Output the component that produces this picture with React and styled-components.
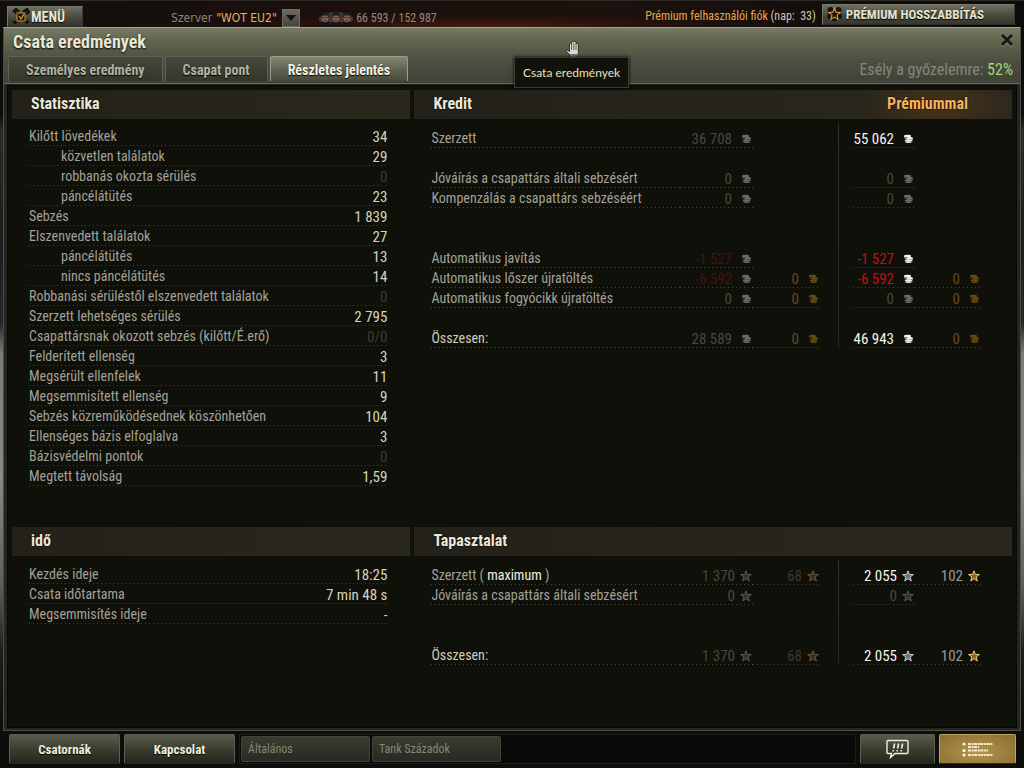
import React from "react";
import styled, { createGlobalStyle } from "styled-components";

const narrow = `"Roboto Condensed", "Liberation Sans Narrow", "Liberation Sans", sans-serif`;

const GlobalStyle = createGlobalStyle`
  * {
    box-sizing: border-box;
  }
  body {
    margin: 0;
    background: #0b0b09;
    font-family: ${narrow};
    font-size: 14px;
    color: #a3a197;
  }
  button, select {
    font-family: inherit;
  }
`;

const Page = styled.div`
  display: flex;
  flex-direction: column;
  min-height: 100vh;
  background: linear-gradient(
    #0b0a09 0,
    #0d0d0d 15%,
    #2a2b2b 17%,
    #1b1d1e 30%,
    #22272a 42%,
    #7d7b79 46%,
    #8b8987 62%,
    #5f5e5c 76%,
    #1d1d1c 85%,
    #0c0c0a 95%
  );
`;

const TopBar = styled.header`
  display: flex;
  align-items: center;
  height: 27px;
  padding: 0 9px 0 7px;
  border-top: 1px solid #2c2a26;
  background: radial-gradient(
      ellipse at 48% 100%,
      #4a1f0f 0,
      rgba(50, 20, 10, 0.7) 18%,
      transparent 38%
    ),
    linear-gradient(90deg, #120f0d, #1b0f0c 30%, #1c110d 60%, #0c0b09);
`;

const MetalButton = styled.button`
  display: flex;
  align-items: center;
  gap: 4px;
  height: 21px;
  padding: 0 ${({ $end }) => $end}px 0 4px;
  border: 1px solid #77796a;
  border-right-color: #3a3b32;
  border-bottom-color: #2b2c25;
  background: linear-gradient(#6d6f60, #45473b 60%, #36382e);
  color: #e6e4d2;
  font-size: 13px;
  font-weight: bold;
  text-shadow: 0 1px 1px #000;
  white-space: nowrap;
`;

const MenuButton = styled(MetalButton)`
  align-self: flex-end;
  gap: 1px;
  font-size: 14px;
`;

const Server = styled.div`
  display: flex;
  align-items: center;
  margin-left: 88px;
  padding-top: 7px;
  font-family: "DejaVu Sans Condensed", "DejaVu Sans", sans-serif;
  font-size: 12px;
  color: #8b877c;
`;

const ServerSelect = styled.select`
  appearance: none;
  padding: 0 23px 0 4px;
  border: 0;
  background: transparent;
  color: #e3ae63;
  font-family: inherit;
  font-size: 12px;
`;

const SelectArrow = styled.span`
  display: flex;
  align-items: center;
  justify-content: center;
  width: 18px;
  height: 18px;
  margin-left: -18px;
  border: 1px solid #6d6e62;
  background: linear-gradient(#6a6b5e, #43443a);
  pointer-events: none;
`;

const Online = styled.div`
  display: flex;
  align-items: center;
  gap: 2px;
  margin-left: 18px;
  padding-top: 8px;
  font-size: 12px;
  color: #8f8b80;
`;

const Account = styled.div`
  margin: 4px 6px 0 auto;
  font-size: 12px;
  color: #c9c6bb;
  white-space: pre;
`;

const Gold = styled.span`
  color: #e9a44b;
`;

const Window = styled.main`
  display: flex;
  flex-direction: column;
  flex: 1;
  margin: 0 3px;
  border: 1px solid #4b4d42;
  border-top-color: #a2a48d;
  background: #24261f;
`;

const TitleBar = styled.div`
  position: relative;
  padding: 3px 4px 2px;
  border-bottom: 1px solid #65675a;
  background: linear-gradient(#777a65 0, #63664f 12px, #4c4e40 34px, #404237);
`;

const TitleRow = styled.div`
  display: flex;
  justify-content: space-between;
  align-items: flex-start;
  height: 25px;
  padding: 0 2px 0 5px;
`;

const Title = styled.h1`
  margin: 0;
  font-size: 18px;
  line-height: 22px;
  color: #e9e7d8;
  text-shadow: 0 1px 2px #000;
`;

const CloseButton = styled.button`
  display: flex;
  padding: 2px 0 0;
  border: 0;
  background: none;
`;

const TabRow = styled.div`
  display: flex;
  align-items: flex-end;
  gap: 2px;
`;

const Tab = styled.button`
  height: 25px;
  padding: 2px 17px 0;
  border: 1px solid ${({ $active }) => ($active ? "#9b9d89" : "#5f6154")};
  border-bottom: 0;
  border-radius: 2px 2px 0 0;
  background: ${({ $active }) =>
    $active
      ? "linear-gradient(#838672, #5c5f4d 60%, #484a3c)"
      : "linear-gradient(#45483b, #34362c)"};
  color: ${({ $active }) => ($active ? "#f4f2e4" : "#b4b2a3")};
  font-size: 14px;
  font-weight: bold;
  text-shadow: 0 1px 1px #000;
`;

const Chance = styled.div`
  margin-left: auto;
  padding: 2px 3px 0 0;
  font-size: 16px;
  line-height: 23px;
  color: #85867a;
  b {
    color: #9fd672;
    font-weight: normal;
  }
`;

const Tooltip = styled.div`
  position: absolute;
  left: 510px;
  top: 29px;
  padding: 6px 8px;
  border: 1px solid #3b3b33;
  background: #12120d;
  box-shadow: 0 0 3px #000;
  color: #e6e3b9;
  font-family: Lato, sans-serif;
  font-size: 12px;
  line-height: 17px;
  white-space: nowrap;
`;

const Cursor = styled.svg`
  position: absolute;
  left: 561px;
  top: 12px;
`;

const Body = styled.div`
  display: grid;
  grid-template-columns: minmax(0, 2fr) minmax(0, 3fr);
  grid-template-rows: auto 1fr;
  flex: 1;
  column-gap: 4px;
  row-gap: 41px;
  margin: 1px 3px 2px;
  padding: 4px 4px 0;
  border: 1px solid #080805;
  background: #10100b;
`;

const Section = styled.section`
  display: flex;
  flex-direction: column;
`;

const SectionHead = styled.div`
  display: flex;
  align-items: center;
  justify-content: space-between;
  height: 29px;
  padding: 0 44px 1px 19px;
  background: ${({ $glow }) =>
      $glow
        ? "radial-gradient(80px 36px at 88% 50%, rgba(96, 62, 24, 0.55), transparent),"
        : ""}
    linear-gradient(90deg, #24211a, #2a271d);
  color: #e9e7d8;
`;

const Heading = styled.h2`
  margin: 0;
  font-size: 16px;
  line-height: 20px;
  color: ${({ $gold }) => ($gold ? "#f0b45f" : "inherit")};
  text-shadow: 0 0 2px #000;
`;

const dots = `repeating-linear-gradient(90deg, #43433a 0 1px, transparent 1px 4px) 0 100% / 100% 1px no-repeat`;

const StatTable = styled.table`
  margin: ${({ $top }) => $top}px 23px 0 17px;
  border-collapse: collapse;
  tr {
    height: 20px;
    background: ${dots};
  }
`;

const StatLabel = styled.th`
  padding: 0 0 0 ${({ $sub }) => ($sub ? 32 : 0)}px;
  font-weight: normal;
  line-height: 18px;
  text-align: left;
  white-space: nowrap;
`;

const StatValue = styled.td`
  padding: 2px 0 0;
  font-size: 15px;
  line-height: 18px;
  text-align: right;
  color: ${({ $dim }) => ($dim ? "#3b3b33" : "#d6d4bc")};
`;

const FinanceTable = styled.table`
  margin: ${({ $top }) => $top}px 31px 0 17px;
  border-collapse: collapse;
  table-layout: fixed;
  tr {
    height: 20px;
  }
  tr:first-child {
    height: 25px;
  }
`;

const FinanceLabel = styled.th`
  padding: 0 0 1px;
  background: ${({ $blank }) => ($blank ? "none" : dots)};
  color: ${({ $total }) => ($total ? "#cfcdb4" : "inherit")};
  font-weight: normal;
  line-height: 18px;
  text-align: left;
  vertical-align: bottom;
  white-space: nowrap;
  b {
    color: #f1f0e4;
    font-weight: normal;
  }
`;

const AmountCell = styled.td`
  padding: 0 1px 0 0;
  background: ${({ $blank }) => ($blank ? "none" : dots)};
  vertical-align: bottom;
`;

const DividerCell = styled.td`
  padding: 0;
  background: linear-gradient(#34332b, #26251e) 18px 0 / 1px 100% no-repeat;
`;

const tones = {
  bright: "#f3f3ee",
  soft: "#9b9a90",
  dim: "#48483f",
  red: "#c60d0b",
  dimRed: "#4a100d",
  gold: "#654a22",
  dimGold: "#3f3726",
};

const Amount = styled.span`
  display: flex;
  align-items: center;
  justify-content: flex-end;
  gap: ${({ $gap }) => $gap}px;
  font-size: 15px;
  line-height: 18px;
  color: ${({ $tone }) => tones[$tone]};
  white-space: nowrap;
  svg {
    flex: none;
  }
`;

const BottomBar = styled.footer`
  display: flex;
  gap: 4px;
  height: 37px;
  padding: 3px 8px 4px 9px;
  background: #0d0d0b;
`;

const FootButton = styled.button`
  display: flex;
  align-items: center;
  justify-content: center;
  width: ${({ $width }) => $width}px;
  height: 30px;
  padding: 0;
  border: 1px solid ${({ $gold }) => ($gold ? "#c0a35e" : "#5c5e4f")};
  border-bottom-color: #2b2b22;
  border-radius: 2px;
  background: ${({ $gold }) =>
    $gold
      ? "radial-gradient(ellipse at 50% 60%, #b3954f, #8a6c30)"
      : "linear-gradient(#595b4b, #3b3d31 50%, #24261d)"};
  color: #f0eedc;
  font-size: 13px;
  font-weight: bold;
  text-shadow: 0 1px 1px #000;
`;

const Channels = styled.div`
  display: flex;
  flex: 1;
  gap: 2px;
  padding: 1px;
  border: 1px solid #1d1d19;
  background: #090908;
`;

const Channel = styled.button`
  width: 129px;
  height: 26px;
  padding: 0 6px;
  border: 1px solid #42443a;
  border-radius: 2px;
  background: linear-gradient(#3a3c31, #282a22);
  color: #85867a;
  font-size: 12px;
  text-align: left;
`;

const Coins = ({ gold, dim }) => {
  const light = gold ? "#e0a02c" : "#f0f0ee";
  const shade = gold ? "#7d5610" : "#80807e";
  return (
    <svg width="11" height="10" viewBox="0 0 11 10" opacity={dim ? 0.4 : 1} aria-hidden="true">
      <ellipse cx="4.500" cy="2.200" rx="3.600" ry="1.400" fill={light} />
      <path d="M1 2.800q3.500 2 7 0v1.500q-3.500 1.800-7 0Z" fill={shade} />
      <ellipse cx="6.800" cy="4.200" rx="3.200" ry="1.200" fill={light} />
      <path d="M3.600 4.700q3.200 1.600 6.400 0v1.400q-3.200 1.600-6.400 0Z" fill={shade} />
      <ellipse cx="5.600" cy="6.600" rx="3.800" ry="1.300" fill={light} />
      <path d="M1.800 7.100q3.800 1.800 7.600 0v1.100q-3.800 1.800-7.600 0Z" fill={shade} />
      <path d="M3 8.400h5" stroke={light} strokeWidth=".9" />
    </svg>
  );
};

const Star = ({ gold, dim }) => (
  <svg width="12" height="12" viewBox="0 0 12 12" opacity={dim ? 0.38 : 1} aria-hidden="true">
    <path
      d="M6 .8 7.3 4.4 11.4 4.5 8.2 7 9.3 11 6 8.7 2.7 11 3.8 7 .6 4.5 4.7 4.4Z"
      fill={gold ? "#8a6426" : "#6c7271"}
      stroke={gold ? "#f3c983" : "#c6cbc9"}
      strokeWidth="1"
    />
  </svg>
);

const MenuIcon = () => (
  <svg width="18" height="17" viewBox="0 0 18 17" aria-hidden="true">
    <path
      d="M1 4 4 1l3 3M11 4l4-3 2 3-3 2M3 4l12 11M15 4 3 15M1 13l3 3M14 15l3-2"
      fill="none"
      stroke="#15130d"
      strokeWidth="2.4"
    />
    <rect x="5" y="5" width="8" height="8" fill="#1c160d" stroke="#c98d35" />
    <path d="m7 8 2 3 3-5" fill="none" stroke="#e2a345" strokeWidth="1.2" />
  </svg>
);

const PremiumIcon = () => (
  <svg width="15" height="16" viewBox="0 0 17 17" aria-hidden="true">
    <circle cx="4" cy="4" r="3.400" fill="#17140e" />
    <circle cx="13" cy="4" r="3.400" fill="#17140e" />
    <circle cx="3.5" cy="11" r="3.400" fill="#17140e" />
    <circle cx="13.5" cy="11" r="3.400" fill="#17140e" />
    <circle cx="8.500" cy="14" r="3" fill="#17140e" />
    <path
      d="m8.500 2 1.800 4.400 4.600.4-3.500 3 1.100 4.600-4-2.500-4 2.500 1.100-4.600-3.500-3 4.600-.4Z"
      fill="#1f180c"
      stroke="#d79c45"
      strokeWidth="1.200"
    />
  </svg>
);

const Crew = () => (
  <svg width="36" height="17" viewBox="0 0 36 17" aria-hidden="true">
    <ellipse cx="18" cy="9" rx="17" ry="7" fill="#8a8583" opacity=".35" />
    {[7, 29, 18].map((x) => (
      <g key={x}>
        <path d={`M${x - 6} 16q0-5 6-5t6 5Z`} fill="#141518" />
        <ellipse cx={x} cy="8" rx="3.400" ry="4.400" fill="#805c50" />
        <path d={`M${x - 4} 8q-.5-6 4-6t4 6l-1.500-2.500h-5Z`} fill="#1b1d21" />
        <path d={`M${x - 2.5} 7.500h2M${x + 0.5} 7.500h2M${x - 1} 10.500h2`} stroke="#33211c" strokeWidth=".8" />
      </g>
    ))}
  </svg>
);

const stats = [
  ["Kilőtt lövedékek", "34"],
  ["közvetlen találatok", "29", true],
  ["robbanás okozta sérülés", "0", true],
  ["páncélátütés", "23", true],
  ["Sebzés", "1 839"],
  ["Elszenvedett találatok", "27"],
  ["páncélátütés", "13", true],
  ["nincs páncélátütés", "14", true],
  ["Robbanási sérüléstől elszenvedett találatok", "0"],
  ["Szerzett lehetséges sérülés", "2 795"],
  ["Csapattársnak okozott sebzés (kilőtt/É.erő)", "0/0"],
  ["Felderített ellenség", "3"],
  ["Megsérült ellenfelek", "11"],
  ["Megsemmisített ellenség", "9"],
  ["Sebzés közreműködésednek köszönhetően", "104"],
  ["Ellenséges bázis elfoglalva", "3"],
  ["Bázisvédelmi pontok", "0"],
  ["Megtett távolság", "1,59"],
];

const times = [
  ["Kezdés ideje", "18:25"],
  ["Csata időtartama", "7 min 48 s"],
  ["Megsemmisítés ideje", "-"],
];

// label, then [value, tone] for base, base gold, premium, premium gold
const credits = [
  ["Szerzett", ["36 708", "dim"], null, ["55 062", "bright"], null],
  null,
  ["Jóváírás a csapattárs általi sebzésért", ["0", "dim"], null, ["0", "dim"], null],
  ["Kompenzálás a csapattárs sebzéséért", ["0", "dim"], null, ["0", "dim"], null],
  null,
  null,
  ["Automatikus javítás", ["-1 527", "dimRed"], null, ["-1 527", "red"], null],
  ["Automatikus lőszer újratöltés", ["-6 592", "dimRed"], ["0", "gold"], ["-6 592", "red"], ["0", "gold"]],
  ["Automatikus fogyócikk újratöltés", ["0", "dim"], ["0", "gold"], ["0", "dim"], ["0", "gold"]],
  null,
  ["Összesen:", ["28 589", "dim"], ["0", "gold"], ["46 943", "bright"], ["0", "gold"]],
];

const experience = [
  [<>Szerzett ( <b>maximum</b> )</>, ["1 370", "dim"], ["68", "dimGold"], ["2 055", "bright"], ["102", "soft"]],
  ["Jóváírás a csapattárs általi sebzésért", ["0", "dim"], null, ["0", "dim"], null],
  null,
  null,
  ["Összesen:", ["1 370", "dim"], ["68", "dimGold"], ["2 055", "bright"], ["102", "soft"]],
];

const StatList = ({ rows, top }) => (
  <StatTable $top={top}>
    <tbody>
      {rows.map(([label, value, sub], i) => (
        <tr key={i}>
          <StatLabel scope="row" $sub={sub}>{label}</StatLabel>
          <StatValue $dim={value === "0" || value === "0/0"}>{value}</StatValue>
        </tr>
      ))}
    </tbody>
  </StatTable>
);

const AmountItem = ({ item, gold, icon: Icon, gap }) => {
  if (!item) return <AmountCell $blank />;
  const [value, tone] = item;
  const dim = !["bright", "red", "soft"].includes(tone);
  return (
    <AmountCell>
      <Amount $tone={tone} $gap={gap}>
        {value}
        <Icon gold={gold} dim={dim} />
      </Amount>
    </AmountCell>
  );
};

const Finance = ({ rows, icon, gap, top }) => (
  <FinanceTable $top={top}>
    <colgroup>
      <col />
      <col width="73" />
      <col width="67" />
      <col width="33" />
      <col width="62" />
      <col width="66" />
    </colgroup>
    <tbody>
      {rows.map((row, i) => {
        const [label, base, baseGold, premium, premiumGold] = row || [];
        return (
          <tr key={i}>
            <FinanceLabel scope="row" $blank={!row} $total={label === "Összesen:"}>
              {label}
            </FinanceLabel>
            <AmountItem item={base} icon={icon} gap={gap} />
            <AmountItem item={baseGold} icon={icon} gap={gap} gold />
            {i === 0 && <DividerCell rowSpan={rows.length} />}
            <AmountItem item={premium} icon={icon} gap={gap} />
            <AmountItem item={premiumGold} icon={icon} gap={gap} gold />
          </tr>
        );
      })}
    </tbody>
  </FinanceTable>
);

const App = () => (
  <Page>
    <GlobalStyle />
    <TopBar>
      <MenuButton $end={17}>
        <MenuIcon />
        MENÜ
      </MenuButton>
      <Server>
        <label htmlFor="server">Szerver</label>
        <ServerSelect id="server">
          <option>"WOT EU2"</option>
        </ServerSelect>
        <SelectArrow>
          <svg width="10" height="6" viewBox="0 0 10 6">
            <path d="M0 0h10L5 6Z" fill="#11110d" />
          </svg>
        </SelectArrow>
      </Server>
      <Online>
        <Crew />
        66 593 / 152 987
      </Online>
      <Account>
        <Gold>Prémium felhasználói fiók</Gold> (nap:  33)
      </Account>
      <MetalButton $end={30}>
        <PremiumIcon />
        PRÉMIUM HOSSZABBÍTÁS
      </MetalButton>
    </TopBar>
    <Window>
      <TitleBar>
        <TitleRow>
          <Title>Csata eredmények</Title>
          <CloseButton aria-label="Bezárás">
            <svg width="14" height="14" viewBox="0 0 14 14">
              <path d="m2 3 10 10M12 3 2 13" stroke="#8b8d7b" strokeWidth="3" />
              <path d="m2 2 10 10M12 2 2 12" stroke="#171812" strokeWidth="3" />
            </svg>
          </CloseButton>
        </TitleRow>
        <TabRow>
          <Tab>Személyes eredmény</Tab>
          <Tab>Csapat pont</Tab>
          <Tab $active>Részletes jelentés</Tab>
          <Chance>
            Esély a győzelemre: <b>52%</b>
          </Chance>
        </TabRow>
        <Cursor width="16" height="20" viewBox="0 0 16 20" aria-hidden="true">
          <path
            d="M5 18.500V15L1.500 11.500Q.5 10 2 9.800L4.500 11.500V4Q5.500 2.500 6.500 4V2Q7.500.5 8.700 2V1.500Q10 .3 11 2V3.500Q12.500 2.500 13.300 4V13L12 18.500Z"
            fill="#d8d9d2"
            stroke="#22231f"
            strokeWidth=".9"
          />
          <path d="M6.600 4v6M8.800 3v7M11 3.500V10" stroke="#3e403a" strokeWidth=".8" />
          <path d="M5.400 14h7.200l-.8 4H5.400Z" fill="#6d7883" />
        </Cursor>
        <Tooltip role="tooltip">Csata eredmények</Tooltip>
      </TitleBar>
      <Body>
        <Section>
          <SectionHead>
            <Heading>Statisztika</Heading>
          </SectionHead>
          <StatList rows={stats} top={7} />
        </Section>
        <Section>
          <SectionHead $glow>
            <Heading>Kredit</Heading>
            <Heading $gold>Prémiummal</Heading>
          </SectionHead>
          <Finance rows={credits} icon={Coins} gap={9} top={4} />
        </Section>
        <Section>
          <SectionHead>
            <Heading>idő</Heading>
          </SectionHead>
          <StatList rows={times} top={8} />
        </Section>
        <Section>
          <SectionHead>
            <Heading>Tapasztalat</Heading>
          </SectionHead>
          <Finance rows={experience} icon={Star} gap={5} top={4} />
        </Section>
      </Body>
    </Window>
    <BottomBar>
      <FootButton $width={111}>Csatornák</FootButton>
      <FootButton $width={111}>Kapcsolat</FootButton>
      <Channels>
        <Channel>Általános</Channel>
        <Channel>Tank Századok</Channel>
      </Channels>
      <FootButton $width={75} aria-label="Értesítések">
        <svg width="24" height="20" viewBox="0 0 24 20">
          <path
            d="M2 1.500h19q1 0 1 1v11q0 1-1 1H9l-4.500 4 1-4H2q-1 0-1-1v-11q0-1 1-1Z"
            fill="none"
            stroke="#f0eedc"
            strokeWidth="1.400"
          />
          <path
            d="m8.600 4.500-1 5M12.600 4.500l-1 5M16.600 4.500l-1 5M7.200 11v1.500M11.200 11v1.500M15.200 11v1.500"
            stroke="#f0eedc"
            strokeWidth="1.600"
          />
        </svg>
      </FootButton>
      <FootButton $width={77} $gold aria-label="Csatalista">
        <svg width="32" height="17" viewBox="0 0 32 17">
          <circle cx="2" cy="3" r="1.600" fill="#fbf6df" />
          <circle cx="2" cy="9.500" r="1.600" fill="#fbf6df" />
          <circle cx="2" cy="14" r="1.600" fill="#fbf6df" />
          <path
            d="M6 3h25M6 6h11M6 9.500h20M6 14h25"
            stroke="#f5ecc9"
            strokeWidth="2"
            strokeDasharray="3 .7 2 .5"
          />
        </svg>
      </FootButton>
    </BottomBar>
  </Page>
);

export default App;
